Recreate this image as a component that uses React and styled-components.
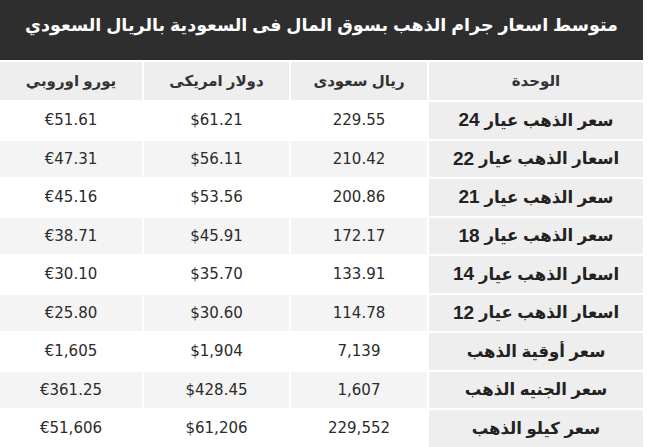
import styled, { createGlobalStyle } from "styled-components";

const GlobalStyle = createGlobalStyle`
  body {
    margin: 0;
    background: #fff;
    font-family: "Liberation Sans", "DejaVu Sans", sans-serif;
  }
`;

const rows = [
  { unit: "سعر الذهب عيار", karat: "24", sar: "229.55", usd: "$61.21", eur: "€51.61" },
  { unit: "اسعار الذهب عيار", karat: "22", sar: "210.42", usd: "$56.11", eur: "€47.31" },
  { unit: "سعر الذهب عيار", karat: "21", sar: "200.86", usd: "$53.56", eur: "€45.16" },
  { unit: "سعر الذهب عيار", karat: "18", sar: "172.17", usd: "$45.91", eur: "€38.71" },
  { unit: "اسعار الذهب عيار", karat: "14", sar: "133.91", usd: "$35.70", eur: "€30.10" },
  { unit: "اسعار الذهب عيار", karat: "12", sar: "114.78", usd: "$30.60", eur: "€25.80" },
  { unit: "سعر أوقية الذهب", sar: "7,139", usd: "$1,904", eur: "€1,605" },
  { unit: "سعر الجنيه الذهب", sar: "1,607", usd: "$428.45", eur: "€361.25" },
  { unit: "سعر كيلو الذهب", sar: "229,552", usd: "$61,206", eur: "€51,606" },
];

const Wrapper = styled.div`
  width: 643px;
  direction: rtl;
  display: flex;
  flex-direction: column;
  gap: 2px;
`;

const Title = styled.div`
  height: 60px;
  background: #2e2e2e;
  color: #fff;
  font-weight: bold;
  font-size: 17.5px;
  display: flex;
  align-items: center;
  justify-content: center;
  padding-bottom: 10px;
  box-sizing: border-box;
`;

const Grid = styled.div`
  display: grid;
  grid-template-columns: 214px 136px 145px 142px;
  grid-template-rows: 38px;
  grid-auto-rows: 36.5px;
  gap: 2px;
`;

const HeadCell = styled.div`
  background: #eee;
  color: #333;
  font-weight: bold;
  font-size: 15px;
  display: flex;
  align-items: center;
  justify-content: center;
`;

const UnitCell = styled.div`
  background: #eee;
  color: #222;
  font-weight: bold;
  font-size: 16.5px;
  display: flex;
  align-items: center;
  justify-content: center;
  gap: 5px;

  b {
    font-family: "Liberation Sans", sans-serif;
    font-size: 19px;
  }
`;

const Cell = styled.div`
  background: ${(p) => (p.$striped ? "#f4f4f4" : "#fff")};
  color: #2b2b2b;
  font-family: "DejaVu Sans", Verdana, sans-serif;
  font-size: 15px;
  direction: ltr;
  display: flex;
  align-items: center;
  justify-content: center;
`;

export default function App() {
  return (
    <>
      <GlobalStyle />
      <Wrapper>
        <Title>متوسط اسعار جرام الذهب بسوق المال فى السعودية بالريال السعودي</Title>
        <Grid>
          <HeadCell>الوحدة</HeadCell>
          <HeadCell>ريال سعودى</HeadCell>
          <HeadCell>دولار امريكى</HeadCell>
          <HeadCell>يورو اوروبي</HeadCell>
          {rows.map((r, i) => {
            const striped = i % 2 === 1;
            return [
              <UnitCell key={`u${i}`}>
                <span>{r.unit}</span>
                {r.karat && <b>{r.karat}</b>}
              </UnitCell>,
              <Cell key={`s${i}`} $striped={striped}>{r.sar}</Cell>,
              <Cell key={`d${i}`} $striped={striped}>{r.usd}</Cell>,
              <Cell key={`e${i}`} $striped={striped}>{r.eur}</Cell>,
            ];
          })}
        </Grid>
      </Wrapper>
    </>
  );
}
